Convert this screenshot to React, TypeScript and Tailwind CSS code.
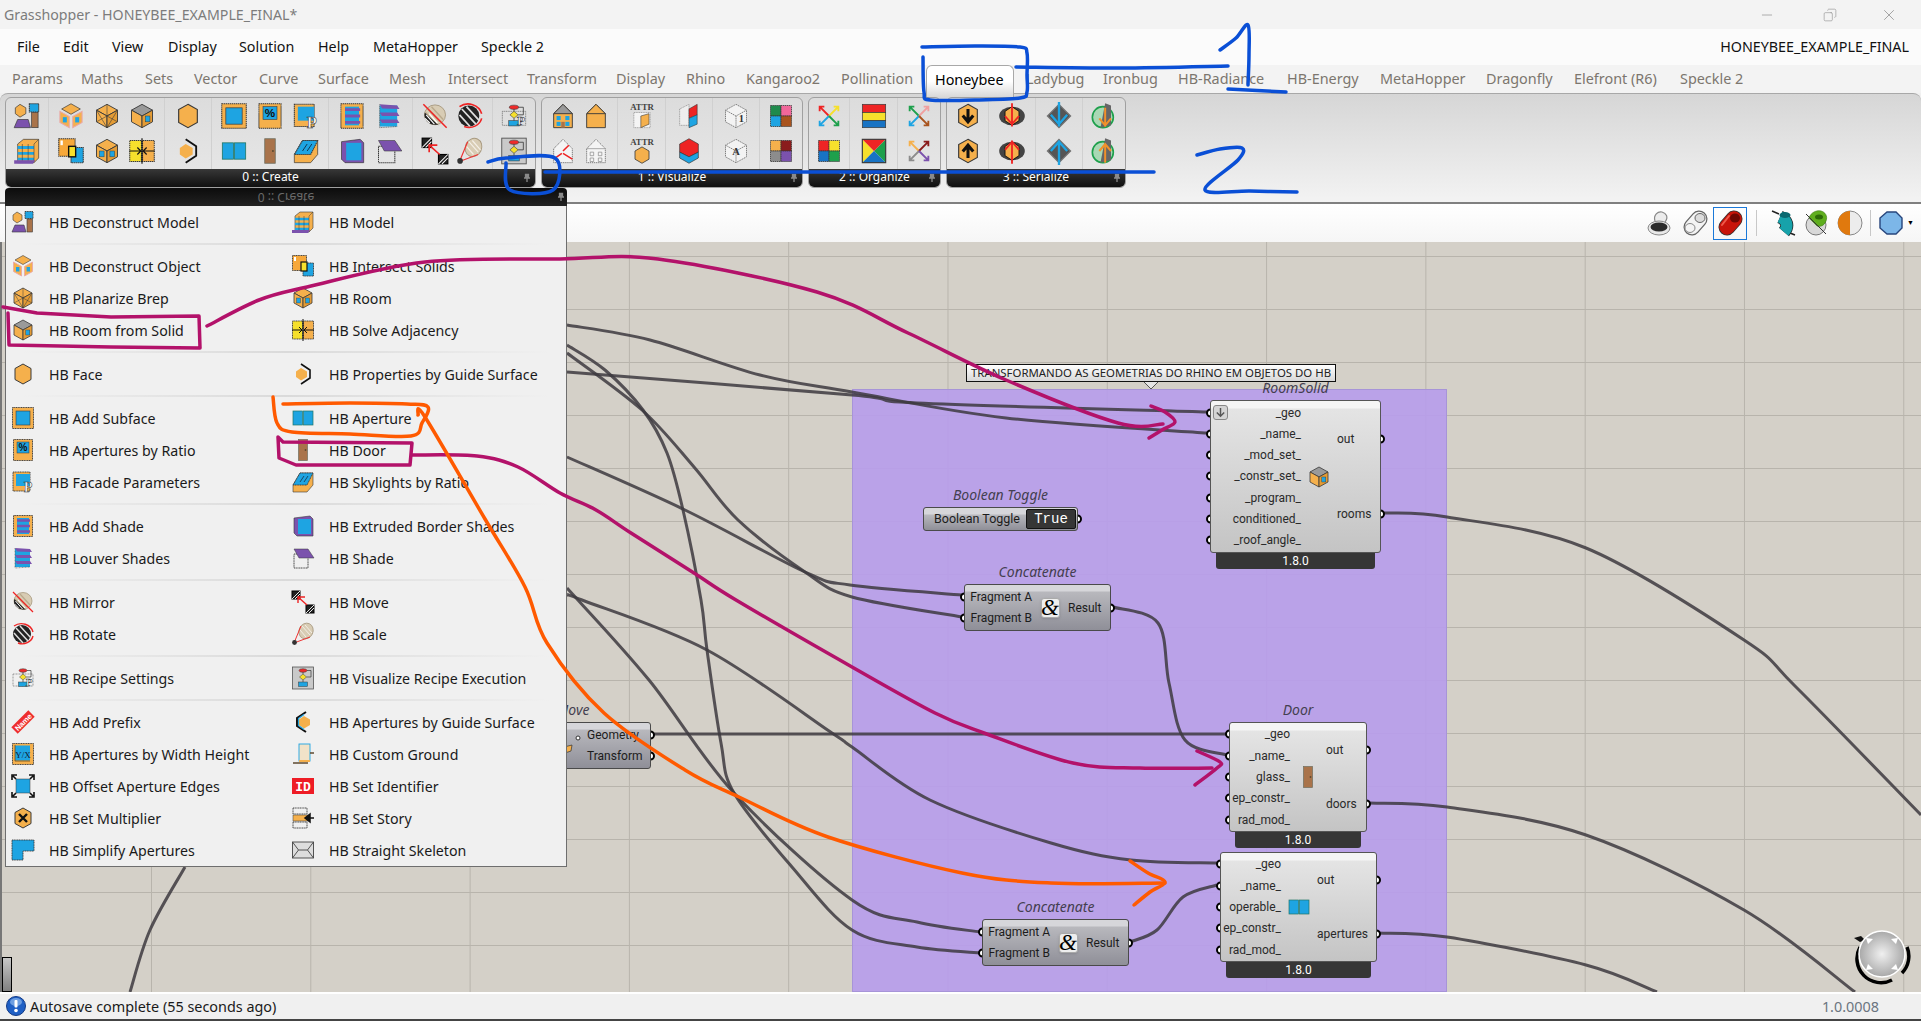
import type { ReactNode } from 'react';
import { Copy, Minus, X } from 'lucide-react';

type Pt = [number, number];

// catmull-rom through the points, good enough for wires and pen strokes
const smooth = (p: Pt[]) => {
  let d = `M${p[0][0]} ${p[0][1]}`;
  for (let i = 0; i < p.length - 1; i++) {
    const a = p[Math.max(i - 1, 0)];
    const b = p[i];
    const c = p[i + 1];
    const e = p[Math.min(i + 2, p.length - 1)];
    d += ` C${b[0] + (c[0] - a[0]) / 6} ${b[1] + (c[1] - a[1]) / 6} ${c[0] - (e[0] - b[0]) / 6} ${c[1] - (e[1] - b[1]) / 6} ${c[0]} ${c[1]}`;
  }
  return d;
};

const straight = (p: Pt[]) => p.map((q, i) => `${i ? 'L' : 'M'}${q[0]} ${q[1]}`).join(' ');

const OR = '#f5b04c';
const BL = '#1ea4e2';
const PU = '#7b52ad';
const BR = '#a9734a';
const DK = '#3a3a3a';
const dash = { stroke: DK, strokeWidth: 0.9, strokeDasharray: '1.2 .5' };

const Hex = ({ fill = OR }: { fill?: string }) => (
  <polygon points="12,2 20,6.5 20,17.5 12,22 4,17.5 4,6.5" fill={fill} stroke={DK} strokeWidth="1" />
);
const Cube = ({ top = OR }: { top?: string }) => (
  <>
    <polygon points="12,2 21,7 12,12 3,7" fill={top} stroke={DK} strokeWidth=".8" />
    <polygon points="3,7 12,12 12,22 3,17" fill={OR} stroke={DK} strokeWidth=".8" />
    <polygon points="21,7 12,12 12,22 21,17" fill="#e39b35" stroke={DK} strokeWidth=".8" />
  </>
);
const Sphere = () => (
  <g>
    <ellipse cx="12" cy="11" rx="9" ry="8.5" fill="#d8ccb4" stroke="#a89a80" strokeWidth=".8" />
    <path d="M6 6l10 11M9 4l10 11M4 9l9 10" stroke="#b9a98c" strokeWidth="1.2" />
  </g>
);
const Flow = () => (
  <g>
    <ellipse cx="12" cy="4.5" rx="4" ry="1.8" fill="#ee2b2b" stroke={DK} strokeWidth=".5" />
    <polygon points="12,8 15.5,11 12,14 8.5,11" fill="#f6e02c" stroke={DK} strokeWidth=".5" />
    <rect x="7.5" y="16" width="9" height="4.5" fill={BL} stroke={DK} strokeWidth=".5" />
    <path d="M12 6v2M12 14v2M15.5 11H20V4.5h-4" fill="none" stroke={DK} strokeWidth=".7" />
  </g>
);
const Quad = ({ c }: { c: string[] }) => (
  <g stroke={DK} strokeWidth=".7" strokeDasharray="1.2 .5">
    <rect x="3" y="3" width="9" height="9" fill={c[0]} />
    <rect x="12" y="3" width="9" height="9" fill={c[1]} />
    <rect x="3" y="12" width="9" height="9" fill={c[2]} />
    <rect x="12" y="12" width="9" height="9" fill={c[3]} />
  </g>
);
const Cross = ({ c }: { c: string[] }) => (
  <g strokeWidth="1.6" fill="none">
    <path d="M12 12L4 4M4 8V4h4" stroke={c[0]} />
    <path d="M12 12l8-8M16 4h4v4" stroke={c[1]} />
    <path d="M12 12l-8 8M4 16v4h4" stroke={c[2]} />
    <path d="M12 12l8 8M20 16v4h-4" stroke={c[3]} />
  </g>
);
const Wire = ({ children }: { children?: ReactNode }) => (
  <g fill="#f3f3f3" stroke="#777" strokeWidth=".8" strokeDasharray="1.2 .6">
    <polygon points="12,2 21,7 21,17 12,22 3,17 3,7" />
    <path d="M12 12V22M3 7l9 5 9-5" fill="none" />
    {children}
  </g>
);
const House = ({ roof = OR }: { roof?: string }) => (
  <g stroke={DK} strokeWidth=".8">
    <polygon points="4,10 12,2 20,10 20,22 4,22" fill={OR} />
    <polygon points="4,10 12,2 20,10 12,10" fill={roof} />
  </g>
);

const ICONS: Record<string, ReactNode> = {
  deconModel: (
    <>
      <polygon points="6,2 11,5 11,10 6,13 2,10 2,5" fill={OR} stroke={DK} strokeWidth=".6" />
      <rect x="14" y="1.5" width="8" height="7" fill={BL} {...dash} />
      <rect x="16" y="9" width="5.5" height="13" fill={BR} stroke={DK} strokeWidth=".6" />
      <polygon points="4,15 13,15 15,22 1,22" fill={PU} stroke={DK} strokeWidth=".6" />
    </>
  ),
  model: (
    <>
      <polygon points="4,6 9,2 22,2 22,18 18,22 4,22" fill={OR} stroke={DK} strokeWidth=".6" />
      <path d="M4 9h14M4 14h14M4 19h14" stroke={BL} strokeWidth="2.4" />
      <path d="M18 6v16M18 6l4-4M8 6v16M13 6v16" stroke={DK} strokeWidth=".5" />
      <polygon points="1,20 19,20 17,23 1,23" fill={PU} />
    </>
  ),
  deconObject: (
    <>
      <polygon points="12,1.5 20,6 12,10.5 4,6" fill={OR} stroke={DK} strokeWidth=".6" />
      <polygon points="2.5,8 10.5,12.5 10.5,22 2.5,17.5" fill={OR} stroke="#e9a8a8" strokeWidth=".9" />
      <polygon points="21.5,8 13.5,12.5 13.5,22 21.5,17.5" fill={OR} stroke="#e9a8a8" strokeWidth=".9" />
      <rect x="5" y="13" width="3.4" height="4.5" fill={BL} />
      <rect x="15.6" y="13" width="3.4" height="4.5" fill={BL} />
    </>
  ),
  planarize: (
    <>
      <Cube />
      <path d="M3 7l9 15M21 7l-9 15M12 2v10M3 17l9-5 9 5" stroke={DK} strokeWidth=".5" fill="none" />
    </>
  ),
  room: (
    <>
      <Cube />
      <rect x="5.5" y="12" width="4" height="5" fill={BL} stroke={DK} strokeWidth=".4" />
      <rect x="14.5" y="12" width="4" height="5" fill={BL} stroke={DK} strokeWidth=".4" />
    </>
  ),
  roomSolid: (
    <>
      <Cube top="#9a9a9a" />
      <rect x="14.8" y="12" width="4" height="5" fill={BL} stroke={DK} strokeWidth=".4" />
    </>
  ),
  intersect: (
    <>
      <rect x="1.5" y="1.5" width="14" height="15" fill="#f7a83a" {...dash} />
      <rect x="3" y="3" width="2" height="4" fill="#fff" />
      <rect x="12" y="9" width="10.5" height="13" fill={BL} {...dash} />
      <rect x="10" y="8" width="6" height="9" fill="#f6e02c" stroke="#111" strokeWidth="1.2" />
    </>
  ),
  adjacency: (
    <>
      <rect x="1.5" y="3" width="10" height="18" fill="#f6e02c" {...dash} />
      <rect x="12.5" y="3" width="10" height="18" fill={OR} {...dash} />
      <path d="M1 12h9M8 9l3 3-3 3M23 12h-9M16 9l-3 3 3 3M12 1v22" stroke="#111" strokeWidth="1" fill="none" />
    </>
  ),
  face: <Hex />,
  guide: (
    <>
      <polygon points="10,6 16,9.5 16,15 10,18.5 5,15 5,9.5" fill={OR} />
      <path d="M10 2l9 6v8l-9 6" fill="none" stroke="#111" strokeWidth="1.6" />
    </>
  ),
  subface: (
    <>
      <rect x="1.5" y="1.5" width="21" height="21" fill={OR} {...dash} />
      <rect x="5" y="5" width="14" height="14" fill={BL} stroke={DK} strokeWidth=".6" />
    </>
  ),
  aperture: (
    <>
      <rect x="2" y="5" width="9.5" height="14" fill={BL} stroke="#276" strokeWidth=".7" />
      <rect x="12.5" y="5" width="9.5" height="14" fill={BL} stroke="#276" strokeWidth=".7" />
    </>
  ),
  ratio: (
    <>
      <rect x="2.5" y="1.5" width="19" height="21" fill={OR} {...dash} />
      <rect x="6" y="4" width="12" height="11" fill={BL} stroke={DK} strokeWidth=".5" />
      <text x="12" y="13" fontSize="10" fontWeight="700" textAnchor="middle" fill="#111" fontFamily="Liberation Sans">%</text>
    </>
  ),
  door: (
    <>
      <rect x="7.5" y="1.5" width="9" height="21" fill={BR} stroke="#6e6e5e" strokeWidth=".7" />
      <circle cx="14.5" cy="12" r=".9" fill="#5d4a30" />
    </>
  ),
  facade: (
    <>
      <rect x="2" y="2" width="17" height="19" fill={OR} {...dash} />
      <rect x="5" y="4" width="14" height="12" fill={BL} />
      <text x="17" y="22" fontSize="14" fontWeight="700" textAnchor="middle" fill="#fff" stroke="#333" strokeWidth=".5" fontFamily="Liberation Serif">P</text>
    </>
  ),
  skylight: (
    <>
      <polygon points="9,3 22,3 22,15 16,22 2,22 2,15" fill={OR} stroke={DK} strokeWidth=".6" />
      <polygon points="9,3 22,3 16,15 2,15" fill={BL} {...dash} />
      <path d="M9 12l4-6M13 12l4-6" stroke="#123" strokeWidth=".7" />
    </>
  ),
  addShade: (
    <>
      <rect x="2.5" y="1.5" width="19" height="21" fill={OR} {...dash} />
      <rect x="6" y="4" width="12" height="16" fill={BL} />
      <path d="M6 6.5h13M6 12h13M6 17.5h13" stroke={PU} strokeWidth="2.4" />
    </>
  ),
  louver: (
    <>
      <rect x="4" y="3" width="15" height="18" fill={BL} />
      <path d="M4 2l15 1 2 3-15-.5zM4 9h15l2 3H6zM4 15h15l2 3H6z" fill={PU} />
      <path d="M4 2v20l15-1" fill="none" stroke={DK} strokeWidth=".5" strokeDasharray="1 .5" />
    </>
  ),
  extruded: (
    <>
      <polygon points="3,4 19,2 22,5 22,22 6,22 3,19" fill={PU} stroke={DK} strokeWidth=".6" />
      <rect x="7" y="5" width="13" height="15" fill={BL} />
    </>
  ),
  shade: (
    <>
      <rect x="3" y="8" width="14" height="14" fill="none" {...dash} />
      <polygon points="3,3 17,3 23,12 8,12" fill={PU} stroke={DK} strokeWidth=".5" />
    </>
  ),
  mirror: (
    <>
      <Sphere />
      <path d="M3.200 9A9 8.500 0 0 0 13.500 19.400L15 20z" fill="#222" />
      <path d="M4.500 11l7 8M7 10l7 8M3.500 14l4 4" stroke="#fff" strokeWidth="1" />
      <path d="M2 2l20 20" stroke="#ee2424" strokeWidth="1.3" />
    </>
  ),
  rotate: (
    <>
      <circle cx="11" cy="12" r="9" fill="#222" />
      <path d="M5 6l12 13M9 4l11 12M3 11l9 10" stroke="#ddd" strokeWidth="1.5" />
      <path d="M3 4a12 11 0 0 1 19 6M22 14a11 10 0 0 1-15 7" fill="none" stroke="#ee2424" strokeWidth="1.4" />
    </>
  ),
  move: (
    <>
      <rect x="1" y="1" width="8" height="8" fill="#222" stroke="#000" />
      <path d="M1 9l8-8M4 9l5-5" stroke="#fff" strokeWidth=".9" />
      <rect x="15" y="15" width="8" height="8" fill="#222" stroke="#000" />
      <path d="M15 23l8-8M18 23l5-5" stroke="#fff" strokeWidth=".9" />
      <path d="M16 15L7 7M7 13V7h7" fill="none" stroke="#ee2424" strokeWidth="1.4" />
    </>
  ),
  scale: (
    <>
      <ellipse cx="15" cy="9" rx="7" ry="8" transform="rotate(25 15 9)" fill="#d8ccb4" stroke="#a89a80" strokeWidth=".8" />
      <path d="M11 4l8 9M14 3l7 8M9 8l6 7" stroke="#f4efe6" strokeWidth="1" />
      <path d="M3 21L10 4M3 21l16-6" stroke="#e33" strokeWidth="1" />
      <circle cx="3.5" cy="20.5" r="2.4" fill="#333" />
    </>
  ),
  recipe: (
    <>
      <rect x="2" y="8" width="20" height="12" fill="none" stroke="#777" strokeWidth=".7" strokeDasharray="1 .5" />
      <Flow />
      <text x="18" y="20" fontSize="11" fontWeight="700" textAnchor="middle" fill="#fff" stroke="#333" strokeWidth=".5" fontFamily="Liberation Serif">P</text>
    </>
  ),
  vizRecipe: (
    <>
      <rect x="1.5" y="1" width="21" height="22" fill="#c9c9c9" stroke="#555" strokeWidth=".8" />
      <Flow />
    </>
  ),
  prefix: (
    <g transform="rotate(-45 12 12)">
      <rect x="0" y="7.5" width="24" height="9" fill="#ee2e2e" />
      <text x="12" y="15" fontSize="7.5" fontWeight="700" textAnchor="middle" fill="#fff" fontFamily="Liberation Sans">Name</text>
    </g>
  ),
  guideAp: (
    <>
      <polygon points="13,6 19,9.5 19,15 13,18.5 8,15 8,9.5" fill={OR} />
      <path d="M15 2L6 8v8l9 6" fill="none" stroke="#111" strokeWidth="2" />
      <path d="M13 4.5L7.5 8.5v7l5.500 4" fill="none" stroke={BL} strokeWidth="1.2" />
    </>
  ),
  widthHeight: (
    <>
      <rect x="1.500" y="1.500" width="21" height="21" fill={OR} {...dash} />
      <rect x="4" y="3.500" width="15" height="15" fill={BL} />
      <path d="M4 19h15M4 3v16" stroke="#6a4a1a" strokeWidth=".8" />
      <text x="12" y="16" fontSize="9" textAnchor="middle" fill="#123" fontFamily="Liberation Serif">Y/X</text>
    </>
  ),
  ground: (
    <>
      <rect x="8" y="2" width="11" height="17" fill="#f1e2c8" stroke={BL} strokeWidth=".9" />
      <path d="M2 21h15M19 11h4" stroke="#5d4a30" strokeWidth="1.4" />
      <path d="M8 19h11" stroke={OR} strokeWidth="2" />
    </>
  ),
  offset: (
    <>
      <rect x="5" y="5" width="14" height="14" fill={BL} stroke={DK} strokeWidth=".5" />
      <path d="M1 6V1h5M18 1h5v5M1 18v5h5M18 23h5v-5M2 2l3 3M22 2l-3 3M2 22l3-3M22 22l-3-3" fill="none" stroke="#111" strokeWidth="1.6" />
    </>
  ),
  identifier: (
    <>
      <rect x="1" y="4" width="22" height="16" fill="#ee1c25" />
      <text x="12" y="17" fontSize="13" fontWeight="700" textAnchor="middle" fill="#fff" fontFamily="Liberation Mono">ID</text>
    </>
  ),
  multiplier: (
    <>
      <Hex />
      <path d="M8 8l8 8M16 8l-8 8" stroke="#111" strokeWidth="2.400" />
    </>
  ),
  story: (
    <>
      <rect x="2" y="2" width="14" height="6" fill="none" {...dash} />
      <rect x="2" y="9" width="15" height="6" fill={OR} stroke={DK} strokeWidth=".5" />
      <rect x="2" y="16" width="14" height="6" fill="none" {...dash} />
      <path d="M23 12h-6M19 8l-5 4 5 4z" stroke="#111" strokeWidth="1.500" fill="#111" />
    </>
  ),
  simplify: <polygon points="1,2 23,2 23,13 12,13 12,22 1,22" fill={BL} {...dash} />,
  skeleton: (
    <>
      <rect x="1.500" y="4" width="21" height="16" fill="#ddd" stroke="#444" strokeWidth=".9" />
      <path d="M1.500 4l6 8h9l6-8M1.500 20l6-8M22.500 20l-6-8" fill="none" stroke="#444" strokeWidth=".9" />
    </>
  ),
  house1: (
    <>
      <House roof="#9a9a9a" />
      <rect x="6.500" y="12" width="3.500" height="3.500" fill={BL} />
      <rect x="14" y="12" width="3.500" height="3.500" fill={BL} />
      <rect x="6.500" y="17" width="3.500" height="3.500" fill={BL} />
      <rect x="10.500" y="17" width="3" height="5" fill={BR} />
      <rect x="14" y="17" width="3.500" height="3.500" fill={BL} />
    </>
  ),
  house2: <House />,
  wireHouse: (
    <>
      <polygon points="4,10 12,2 20,10 20,22 4,22" fill="#f4f4f4" stroke="#777" strokeWidth=".8" strokeDasharray="1.200 .6" />
      <path d="M12 12l5-5M12 14l8 5M11 14l-7 5" stroke="#ee2424" strokeWidth="1.300" />
    </>
  ),
  wireHouse2: (
    <>
      <polygon points="4,10 12,2 20,10 20,22 4,22" fill="#f4f4f4" stroke="#777" strokeWidth=".8" strokeDasharray="1.200 .6" />
      <path d="M4 10h16M7 13h3v3H7zM14 13h3v3h-3zM7 18h3v3H7zM14 18h3v3h-3z" fill="none" stroke="#888" strokeWidth=".6" />
    </>
  ),
  attrCube: (
    <>
      <text x="12" y="7" fontSize="7.500" fontWeight="700" textAnchor="middle" fill="#444" fontFamily="Liberation Serif">ATTR</text>
      <rect x="5" y="9" width="14" height="13" fill="#f4f4f4" stroke="#999" strokeWidth=".7" strokeDasharray="1 .5" />
      <polygon points="11,12 18,10 18,19 11,22" fill={OR} stroke={DK} strokeWidth=".5" />
    </>
  ),
  attrHex: (
    <>
      <text x="12" y="7" fontSize="7.500" fontWeight="700" textAnchor="middle" fill="#444" fontFamily="Liberation Serif">ATTR</text>
      <polygon points="12,8.500 18,12 18,19 12,22.500 6,19 6,12" fill={OR} stroke={DK} strokeWidth=".7" />
    </>
  ),
  redBlue: (
    <>
      <polygon points="4,6 12,2 12,20 4,20" fill="#eee" stroke="#888" strokeWidth=".6" strokeDasharray="1 .5" />
      <polygon points="12,6 19,2 19,11 12,14" fill="#ee2424" stroke={DK} strokeWidth=".5" />
      <polygon points="12,14 19,11 19,19 12,22" fill={BL} stroke={DK} strokeWidth=".5" />
    </>
  ),
  redBlueHex: (
    <>
      <polygon points="12,1.500 20,6 20,13 12,17 4,13 4,6" fill="#ee2424" stroke={DK} strokeWidth=".6" />
      <polygon points="4,13 12,17 20,13 20,18 12,22.500 4,18" fill={BL} stroke={DK} strokeWidth=".6" />
    </>
  ),
  cube1: (
    <Wire>
      <text x="16.500" y="17" fontSize="9" fontWeight="700" textAnchor="middle" fill="#333" stroke="none" fontFamily="Liberation Serif">1</text>
    </Wire>
  ),
  cubeA: (
    <Wire>
      <text x="12" y="15.500" fontSize="9" fontWeight="700" textAnchor="middle" fill="#333" stroke="none" fontFamily="Liberation Serif">A</text>
    </Wire>
  ),
  quadA: <Quad c={['#1f8a4c', '#f0679a', BL, '#a9541e']} />,
  quadB: <Quad c={[OR, '#8a1c1c', '#8c8c8c', PU]} />,
  quadC: <Quad c={['#ee2424', '#f6e02c', '#1873c4', '#1ea04c']} />,
  crossA: <Cross c={['#ee2424', '#f6e02c', BL, '#1ea04c']} />,
  crossB: <Cross c={['#1ea04c', '#f0a0a0', BL, '#a9541e']} />,
  crossC: <Cross c={[OR, '#8a1c1c', '#8c8c8c', PU]} />,
  stripes: (
    <>
      <rect x="2" y="2" width="20" height="7" fill="#ee2424" stroke={DK} strokeWidth=".6" />
      <rect x="2" y="9" width="20" height="7" fill="#f6e02c" stroke={DK} strokeWidth=".6" />
      <rect x="2" y="16" width="20" height="6" fill="#1873c4" stroke={DK} strokeWidth=".6" />
    </>
  ),
  xColor: (
    <>
      <polygon points="2,2 12,12 2,22" fill="#f6e02c" />
      <polygon points="22,2 12,12 22,22" fill="#1ea04c" />
      <polygon points="2,2 22,2 12,12" fill="#ee2424" />
      <polygon points="2,22 22,22 12,12" fill="#1873c4" />
      <rect x="2" y="2" width="20" height="20" fill="none" stroke={DK} strokeWidth="1" />
    </>
  ),
  dn: (
    <>
      <Hex />
      <path d="M12 6v11M7.500 11.500L12 17l4.500-5.500" fill="none" stroke="#111" strokeWidth="2.600" />
    </>
  ),
  up: (
    <>
      <Hex />
      <path d="M12 18V7M7.500 12.500L12 7l4.500 5.500" fill="none" stroke="#111" strokeWidth="2.600" />
    </>
  ),
  redDn: (
    <>
      <ellipse cx="12" cy="12" rx="11" ry="8" fill="#444" />
      <polygon points="12,4 18,8 18,16 12,20 6,16 6,8" fill={OR} stroke="#111" strokeWidth=".8" />
      <path d="M12 1v20M6 12l6 7 6-7" fill="none" stroke="#ee2424" strokeWidth="1.600" />
    </>
  ),
  redUp: (
    <>
      <ellipse cx="12" cy="12" rx="11" ry="8" fill="#444" />
      <polygon points="12,4 18,8 18,16 12,20 6,16 6,8" fill={OR} stroke="#111" strokeWidth=".8" />
      <path d="M12 23V3M6 11l6-7 6 7" fill="none" stroke="#ee2424" strokeWidth="1.600" />
    </>
  ),
  blueDn: (
    <>
      <polygon points="12,2 22,12 12,22 2,12" fill="#555" stroke="#777" />
      <path d="M12 0v21M5 11l7 8 7-8" fill="none" stroke={BL} strokeWidth="2" />
    </>
  ),
  blueUp: (
    <>
      <polygon points="12,2 22,12 12,22 2,12" fill="#555" stroke="#777" />
      <path d="M12 24V3M5 12l7-8 7 8" fill="none" stroke={BL} strokeWidth="2" />
    </>
  ),
  greenDn: (
    <>
      <ellipse cx="11" cy="13" rx="9" ry="9" fill="#a9d8b4" stroke="#1ea04c" strokeWidth="1.400" />
      <polygon points="13,1 18,3 18,20 9,22" fill="#666" />
      <path d="M13 5v16M8 14l5 6 5-6" fill="none" stroke="#f0912a" strokeWidth="1.700" />
    </>
  ),
  greenUp: (
    <>
      <ellipse cx="11" cy="13" rx="9" ry="9" fill="#a9d8b4" stroke="#1ea04c" strokeWidth="1.400" />
      <polygon points="13,1 18,3 18,20 9,22" fill="#666" />
      <path d="M13 22V6M8 12l5-6 5 6" fill="none" stroke="#f0912a" strokeWidth="1.700" />
    </>
  ),
};

const Ic = ({ n, size = 24 }: { n: string; size?: number }) => (
  <svg viewBox="0 0 24 24" width={size} height={size} className="shrink-0 overflow-visible">
    {ICONS[n]}
  </svg>
);

const MENU = [
  { label: 'File', w: 'w-[46px]' },
  { label: 'Edit', w: 'w-[49px]' },
  { label: 'View', w: 'w-[56px]' },
  { label: 'Display', w: 'w-[71px]' },
  { label: 'Solution', w: 'w-[79px]' },
  { label: 'Help', w: 'w-[55px]' },
  { label: 'MetaHopper', w: 'w-[108px]' },
  { label: 'Speckle 2', w: 'w-[90px]' },
];

const TABS_LEFT = [
  { label: 'Params', w: 'w-[69px]' },
  { label: 'Maths', w: 'w-[64px]' },
  { label: 'Sets', w: 'w-[49px]' },
  { label: 'Vector', w: 'w-[65px]' },
  { label: 'Curve', w: 'w-[59px]' },
  { label: 'Surface', w: 'w-[71px]' },
  { label: 'Mesh', w: 'w-[59px]' },
  { label: 'Intersect', w: 'w-[79px]' },
  { label: 'Transform', w: 'w-[89px]' },
  { label: 'Display', w: 'w-[70px]' },
  { label: 'Rhino', w: 'w-[60px]' },
  { label: 'Kangaroo2', w: 'w-[95px]' },
  { label: 'Pollination', w: 'w-[85px]' },
];

const TABS_RIGHT = [
  { label: 'Ladybug', w: 'w-[77px]' },
  { label: 'Ironbug', w: 'w-[75px]' },
  { label: 'HB-Radiance', w: 'w-[109px]' },
  { label: 'HB-Energy', w: 'w-[93px]' },
  { label: 'MetaHopper', w: 'w-[106px]' },
  { label: 'Dragonfly', w: 'w-[88px]' },
  { label: 'Elefront (R6)', w: 'w-[106px]' },
  { label: 'Speckle 2', w: 'w-[90px]' },
];

const PANELS = [
  {
    title: '0 :: Create',
    w: 'w-[531px]',
    groups: [
      { w: 'w-[43px]', cols: [['deconModel', 'model']] },
      { w: 'w-[116.500px]', cols: [['deconObject', 'intersect'], ['planarize', 'room'], ['roomSolid', 'adjacency']] },
      { w: 'w-[46.500px]', cols: [['face', 'guide']] },
      { w: 'w-[117.500px]', cols: [['subface', 'aperture'], ['ratio', 'door'], ['facade', 'skylight']] },
      { w: 'w-[84px]', cols: [['addShade', 'extruded'], ['louver', 'shade']] },
      { w: 'w-[80px]', cols: [['mirror', 'move'], ['rotate', 'scale']] },
      { w: 'w-[42px]', cols: [['recipe', 'vizRecipe']] },
    ],
  },
  {
    title: '1 :: Visualize',
    w: 'w-[262px]',
    groups: [
      { w: 'w-[76px]', cols: [['house1', 'wireHouse'], ['house2', 'wireHouse2']] },
      { w: 'w-[48px]', cols: [['attrCube', 'attrHex']] },
      { w: 'w-[47px]', cols: [['redBlue', 'redBlueHex']] },
      { w: 'w-[46.500px]', cols: [['cube1', 'cubeA']] },
      { w: 'w-[42px]', cols: [['quadA', 'quadB']] },
    ],
  },
  {
    title: '2 :: Organize',
    w: 'w-[133px]',
    groups: [
      { w: 'w-[41px]', cols: [['crossA', 'quadC']] },
      { w: 'w-[48px]', cols: [['stripes', 'xColor']] },
      { w: 'w-[42px]', cols: [['crossB', 'crossC']] },
    ],
  },
  {
    title: '3 :: Serialize',
    w: 'w-[180px]',
    groups: [
      { w: 'w-[42px]', cols: [['dn', 'up']] },
      { w: 'w-[47px]', cols: [['redDn', 'redUp']] },
      { w: 'w-[47px]', cols: [['blueDn', 'blueUp']] },
      { w: 'w-[42px]', cols: [['greenDn', 'greenUp']] },
    ],
  },
];

const MENU_GROUPS: [string, string][][] = [
  [['deconModel|HB Deconstruct Model', 'model|HB Model']],
  [
    ['deconObject|HB Deconstruct Object', 'intersect|HB Intersect Solids'],
    ['planarize|HB Planarize Brep', 'room|HB Room'],
    ['roomSolid|HB Room from Solid', 'adjacency|HB Solve Adjacency'],
  ],
  [['face|HB Face', 'guide|HB Properties by Guide Surface']],
  [
    ['subface|HB Add Subface', 'aperture|HB Aperture'],
    ['ratio|HB Apertures by Ratio', 'door|HB Door'],
    ['facade|HB Facade Parameters', 'skylight|HB Skylights by Ratio'],
  ],
  [
    ['addShade|HB Add Shade', 'extruded|HB Extruded Border Shades'],
    ['louver|HB Louver Shades', 'shade|HB Shade'],
  ],
  [
    ['mirror|HB Mirror', 'move|HB Move'],
    ['rotate|HB Rotate', 'scale|HB Scale'],
  ],
  [['recipe|HB Recipe Settings', 'vizRecipe|HB Visualize Recipe Execution']],
  [
    ['prefix|HB Add Prefix', 'guideAp|HB Apertures by Guide Surface'],
    ['widthHeight|HB Apertures by Width Height', 'ground|HB Custom Ground'],
    ['offset|HB Offset Aperture Edges', 'identifier|HB Set Identifier'],
    ['multiplier|HB Set Multiplier', 'story|HB Set Story'],
    ['simplify|HB Simplify Apertures', 'skeleton|HB Straight Skeleton'],
  ],
];

const Pin = () => (
  <svg viewBox="0 0 10 10" width="10" height="10" className="shrink-0">
    <path d="M5 9V5M2 5h6M3.500 5V1.500h3V5" stroke="#8a8a8a" strokeWidth="1.300" fill="#8a8a8a" />
  </svg>
);

const Panel = ({ title, w, groups }: (typeof PANELS)[number]) => (
  <div className={`${w} overflow-hidden rounded-md border border-[#a0a0a0] bg-gradient-to-b from-[#dcdcdc] to-[#e8e8e8]`}>
    <div className="flex h-[71px]">
      {groups.map((g, i) => (
        <div key={i} className={`${g.w} flex border-r border-[#d0d0d0] px-1 last:border-r-0`}>
          {g.cols.map((c) => (
            <div key={c[0]} className="flex flex-1 flex-col items-center justify-center">
              <div className="flex h-[35px] items-center"><Ic n={c[0]} size={28} /></div>
              <div className="flex h-[35px] items-center"><Ic n={c[1]} size={28} /></div>
            </div>
          ))}
        </div>
      ))}
    </div>
    <div className="relative flex h-[18px] items-center justify-center bg-gradient-to-b from-[#383838] to-[#101010] pb-[3px] text-[12px] text-white">
      {title}
      <span className="absolute right-[3px] top-1"><Pin /></span>
    </div>
  </div>
);

const Dropdown = () => (
  <div className="absolute left-[5px] top-[188px] z-20 w-[562px]">
    <div className="relative flex h-[18px] items-center justify-center rounded-t-sm bg-gradient-to-b from-[#0c0c0c] to-[#222] text-[12px] text-[#6a6a6a]">
      <span className="-scale-y-100">0 :: Create</span>
      <span className="absolute right-[1px] top-1"><Pin /></span>
    </div>
    <div className="border border-t-0 border-[#6e6e6e] bg-[#f0f0f0]">
      {MENU_GROUPS.map((g, gi) => (
        <div key={gi}>
          {gi > 0 && (
            <div className="flex h-3 items-center px-4">
              <div className="h-[2px] w-full bg-gradient-to-r from-transparent via-[#dadada] to-transparent" />
            </div>
          )}
          {g.map((row) => (
            <div key={row[0]} className="grid h-8 grid-cols-[280px_280px]">
              {row.map((cell) => {
                const [icon, label] = cell.split('|');
                return (
                  <div key={cell} className="flex items-center gap-[14px] pl-[5px] text-[14.200px] text-[#1a1a1a]">
                    <Ic n={icon} size={24} />
                    <span className="pt-px">{label}</span>
                  </div>
                );
              })}
            </div>
          ))}
        </div>
      ))}
    </div>
  </div>
);

// sits under the box so only the outer half of the ring shows
const Grip = ({ side }: { side: 'l' | 'r' }) => (
  <span
    className={`absolute top-1/2 -z-10 h-[9px] w-[9px] -translate-y-1/2 rounded-full border-2 border-black bg-white ${
      side === 'l' ? '-left-[5px]' : '-right-[5px]'
    }`}
  />
);

const Title = ({ children }: { children: ReactNode }) => (
  <div className="mb-[2px] h-5 text-center text-[14px] leading-5 text-[#443f50] italic">{children}</div>
);

type HBProps = {
  pos: string;
  title: string;
  h: string;
  inW: string;
  inputs: string[];
  outputs: string[];
  icon: string;
  iconSize?: number;
  arrow?: boolean;
};

const HBNode = ({ pos, title, h, inW, inputs, outputs, icon, iconSize = 24, arrow }: HBProps) => (
  <div className={`absolute z-10 ${pos}`}>
    <Title>{title}</Title>
    <div className={`relative flex ${h} rounded-[3px] border border-[#555] bg-[linear-gradient(#f5f5f5_0,#f5f5f5_7px,#e4e4e4_8px,#c4c4c4_100%)] font-['Roboto',sans-serif] text-[12px] text-[#2a2a2a]`}>
      {arrow && (
        <div className="absolute left-[2px] top-[4px] flex h-[15px] w-[15px] items-center justify-center rounded-[3px] border border-[#888] bg-[#d4d4d4]">
          <svg viewBox="0 0 12 12" width="11" height="11">
            <path d="M6 1v9M2 6l4 4 4-4" fill="none" stroke="#555" strokeWidth="1.600" />
          </svg>
        </div>
      )}
      <div className={`${inW} flex shrink-0 flex-col justify-center`}>
        {inputs.map((t) => (
          <div key={t} className="relative flex h-[21.330px] items-center justify-end">
            <Grip side="l" />
            {t}
          </div>
        ))}
      </div>
      <div className="flex w-9 shrink-0 items-center justify-center"><Ic n={icon} size={iconSize} /></div>
      <div className="flex flex-1 flex-col">
        {outputs.map((t) => (
          <div key={t} className="relative flex flex-1 items-center">
            {t}
            <Grip side="r" />
          </div>
        ))}
      </div>
    </div>
    <div className="mx-[6px] flex h-4 items-center justify-center rounded-b-[3px] bg-[#363636] font-['Roboto',sans-serif] text-[12px] text-white">1.8.0</div>
  </div>
);

const GreyBox = "bg-[linear-gradient(#d6d6da_0,#d6d6da_6px,#b8b8bd_7px,#8f8f98_100%)] font-['Roboto',sans-serif]";

const Concat = ({ pos }: { pos: string }) => (
  <div className={`absolute z-10 w-[147px] ${pos}`}>
    <Title>Concatenate</Title>
    <div className={`relative flex h-[47px] rounded-[3px] border border-[#4a4a4a] text-[12px] text-[#1c1c1c] ${GreyBox}`}>
      <div className="flex w-[67px] shrink-0 flex-col justify-center">
        {['Fragment A', 'Fragment B'].map((t) => (
          <div key={t} className="relative flex h-[21.330px] items-center justify-end">
            <Grip side="l" />
            {t}
          </div>
        ))}
      </div>
      <div className="flex w-9 shrink-0 items-center justify-center">
        <span className="flex h-[20px] w-[19px] items-center justify-center rounded-[3px] border border-[#aaa] bg-[#eeeeee] font-['Liberation_Serif',serif] text-[23px] leading-none text-black italic shadow-sm">&amp;</span>
      </div>
      <div className="relative flex flex-1 items-center">
        Result
        <Grip side="r" />
      </div>
    </div>
  </div>
);

const Toggle = () => (
  <div className="absolute left-[921px] top-[243px] z-10 w-[155px]">
    <Title>Boolean Toggle</Title>
    <div className={`relative flex h-[24px] items-center rounded-[3px] border border-[#4a4a4a] pl-[10px] text-[12.500px] text-[#1c1c1c] ${GreyBox}`}>
      Boolean Toggle
      <span className="absolute right-[1px] top-[1px] flex h-5 w-[50px] items-center justify-center rounded-[2px] border border-[#111] bg-[#363636] font-['Liberation_Mono',monospace] text-[14px] text-white">True</span>
      <Grip side="r" />
    </div>
  </div>
);

const MoveNode = () => (
  <div className="absolute left-[493px] top-[458px] z-10 w-[156px]">
    <Title>Move</Title>
    <div className={`relative flex h-[47px] justify-end rounded-[3px] border border-[#4a4a4a] text-[12px] text-[#1c1c1c] ${GreyBox}`}>
      <svg viewBox="0 0 24 24" width="24" height="24" className="absolute left-[62px] top-[10px]">
        <path d="M6 14l8-2-1 6-6 2z" fill={OR} stroke="#333" strokeWidth=".7" />
        <circle cx="20" cy="5" r="2" fill="#fff" stroke="#333" />
      </svg>
      <div className="flex w-[63px] flex-col justify-center">
        {['Geometry', 'Transform'].map((t) => (
          <div key={t} className="relative flex h-[21.330px] items-center">
            {t}
            <Grip side="r" />
          </div>
        ))}
      </div>
    </div>
  </div>
);

const WIRES: Pt[][] = [
  [[567, 372], [852, 395], [917, 403], [1207, 412]],
  [[567, 325], [650, 340], [760, 375], [852, 392], [1006, 418], [1207, 433]],
  [[567, 345], [605, 370], [643, 410], [667, 453], [683, 510], [701, 600], [707, 650], [721, 743], [734, 793], [792, 867], [852, 930], [917, 947], [982, 953]],
  [[567, 353], [642, 410], [694, 467], [738, 520], [805, 572], [852, 597], [962, 617]],
  [[567, 457], [685, 510], [805, 572], [850, 585], [962, 595]],
  [[567, 588], [649, 680], [734, 793], [852, 900], [917, 922], [980, 932]],
  [[567, 595], [582, 600], [707, 650], [832, 733], [852, 747], [930, 800], [1051, 843], [1131, 860], [1217, 863]],
  [[652, 734], [1227, 734]],
  [[1113, 607], [1158, 623], [1169, 683], [1185, 740], [1227, 755]],
  [[1130, 942], [1157, 930], [1183, 897], [1217, 885]],
  [[1383, 513], [1447, 517], [1586, 548], [1744, 640], [1796, 687], [1921, 815]],
  [[1369, 803], [1447, 807], [1586, 835], [1744, 910], [1855, 992]],
  [[1377, 933], [1447, 937], [1586, 965], [1657, 992]],
  [[185, 867], [150, 930], [130, 992]],
];

const BLUE: Pt[][] = [
  [[922, 47], [975, 46], [1020, 47], [1027, 53], [1027, 75], [1027, 92], [1020, 98], [975, 100], [930, 100], [924, 92], [923, 57]],
  [[1016, 67], [1120, 68], [1228, 66]],
  [[1220, 50], [1236, 38], [1248, 25], [1249, 55], [1248, 85]],
  [[1228, 89], [1286, 92]],
  [[1197, 155], [1220, 149], [1242, 148], [1238, 160], [1205, 190], [1250, 191], [1297, 192]],
  [[488, 162], [506, 158], [555, 158], [553, 190], [510, 190], [506, 163]],
  [[545, 172], [800, 172], [1154, 172]],
];

const CRIMSON: Pt[][] = [
  [[207, 326], [259, 300], [307, 287], [425, 262], [560, 259], [658, 259], [817, 292], [908, 333], [1006, 380], [1118, 423], [1163, 424]],
  [[1151, 406], [1165, 412], [1175, 422], [1162, 430], [1149, 438]],
  [[412, 455], [477, 456], [518, 467], [560, 493], [596, 510], [631, 533], [694, 573], [736, 600], [852, 667], [935, 713], [984, 733], [1073, 763], [1140, 768], [1212, 768]],
  [[1197, 751], [1220, 762], [1217, 768], [1195, 785]],
];

// the two boxes drawn with the pen have nearly straight sides
const CRIMSON_BOX: Pt[][] = [
  [[3, 307], [37, 313], [111, 317], [199, 316], [200, 348], [111, 347], [9, 345], [8, 313]],
  [[278, 437], [283, 442], [412, 443], [410, 465], [296, 465], [279, 458], [278, 437]],
];

const ORANGE: Pt[][] = [
  [[273, 397], [277, 423], [292, 432], [350, 434], [411, 436], [422, 423], [428, 407], [407, 404], [350, 403], [283, 404]],
  [[418, 415], [425, 417], [485, 519], [525, 587], [547, 643], [604, 713], [685, 770], [739, 797], [828, 837], [962, 873], [1051, 883], [1165, 883]],
  [[1130, 861], [1148, 873], [1165, 882], [1150, 892], [1134, 905]],
];

const ToolIcon = ({ kind }: { kind: string }) => (
  <svg viewBox="0 0 26 28" width="26" height="28">
    {kind === 'ghost' && (
      <>
        <path d="M9 12c-2-6 3-10 7-9s7 5 3 10" fill="#ececec" stroke="#888" strokeWidth="1.200" />
        <ellipse cx="13" cy="19" rx="11" ry="7" fill="#e8e8e8" stroke="#888" />
        <ellipse cx="13" cy="18" rx="8.500" ry="4.500" fill="#2c2c2c" />
      </>
    )}
    {kind === 'wire' && (
      <>
        <path d="M10 18L17 10" stroke="#666" strokeWidth="17" strokeLinecap="round" />
        <path d="M10 18L17 10" stroke="#f4f4f4" strokeWidth="14.500" strokeLinecap="round" />
        <ellipse cx="18" cy="9" rx="5" ry="4.500" fill="#dcdcdc" stroke="#666" />
        <ellipse cx="8" cy="19" rx="5" ry="4.500" fill="#f4f4f4" stroke="#888" />
      </>
    )}
    {kind === 'red' && (
      <>
        <path d="M10 18L17 10" stroke="#333" strokeWidth="17" strokeLinecap="round" />
        <path d="M10 18L17 10" stroke="#c8140a" strokeWidth="15.500" strokeLinecap="round" />
        <path d="M5 16L12 7" stroke="#ef5a4a" strokeWidth="2" strokeLinecap="round" />
        <ellipse cx="18" cy="9" rx="5" ry="4.500" fill="#6e0703" />
      </>
    )}
    {kind === 'teal' && (
      <>
        <path d="M2 2l7 3M20 24l5 2" stroke="#222" strokeWidth="1.500" />
        <path d="M10 8C17 11 19 17 14 23" fill="none" stroke="#222" strokeWidth="13" />
        <path d="M10 8C17 11 19 17 14 23" fill="none" stroke="#17a2aa" strokeWidth="11.500" />
        <ellipse cx="15" cy="6" rx="5.500" ry="3" fill="#0a6970" />
      </>
    )}
    {kind === 'green' && (
      <>
        <circle cx="13" cy="16" r="10" fill="#d8d8d8" stroke="#777" />
        <path d="M6 9c2-6 8-8 12-7s7 5 5 10-6 6-9 5z" fill="#5fae1e" stroke="#3a7a10" strokeWidth=".6" />
        <ellipse cx="16" cy="8" rx="4" ry="2.500" fill="#2c6a08" />
        <path d="M3 5l20 20" stroke="#333" />
      </>
    )}
    {kind === 'half' && (
      <>
        <circle cx="13" cy="14" r="12" fill="#ececec" stroke="#888" />
        <path d="M13 2a12 12 0 0 0 0 24z" fill="#e0790e" />
      </>
    )}
    {kind === 'blue' && (
      <polygon points="9,3 18,3 24,9 24,19 18,25 9,25 2,19 2,9" fill="#7cb6e8" stroke="#27457c" strokeWidth="1.400" />
    )}
  </svg>
);

const App = () => (
  <div className="relative flex h-[1021px] w-[1921px] flex-col overflow-hidden bg-[#f0f0f0] font-['Noto_Sans',sans-serif]">
    {/* title bar */}
    <div className="flex h-[29px] items-center justify-between bg-[#f3f3f3] pl-1 text-[14.200px] text-[#7c7c7c]">
      <span>Grasshopper - HONEYBEE_EXAMPLE_FINAL*</span>
      <div className="flex items-center text-[#8a8a8a]">
        <Minus size={16} strokeWidth={1} />
        <Copy size={14} strokeWidth={1} className="ml-[48px] -scale-x-100" />
        <X size={18} strokeWidth={1} className="ml-[43px] mr-[23px]" />
      </div>
    </div>

    {/* menu */}
    <div className="flex h-9 items-center justify-between bg-[#fbfbfb] pl-[17px] pr-[12px] text-[14.300px] text-[#111]">
      <div className="flex">
        {MENU.map((m) => (
          <span key={m.label} className={m.w}>{m.label}</span>
        ))}
      </div>
      <span>HONEYBEE_EXAMPLE_FINAL</span>
    </div>

    {/* tabs */}
    <div className="relative z-[1] flex h-7 items-start bg-[#f3f3f3] pl-3 text-[14.400px] text-[#7c766e]">
      {TABS_LEFT.map((t) => (
        <span key={t.label} className={`${t.w} pt-[3px]`}>{t.label}</span>
      ))}
      <span className="mr-3 h-8 w-[88px] rounded-t-md border border-b-0 border-[#a8a8a8] bg-gradient-to-b from-white via-white to-[#d8d8d8] pl-2 pt-[3px] text-black">Honeybee</span>
      {TABS_RIGHT.map((t) => (
        <span key={t.label} className={`${t.w} pt-[3px]`}>{t.label}</span>
      ))}
    </div>

    {/* ribbon */}
    <div className="flex h-[111px] gap-[5px] rounded-t-lg border-t border-b-2 border-t-[#a8a8a8] border-b-[#808080] bg-gradient-to-b from-[#d6d6d6] to-[#f3f3f3] pl-[5px] pt-[3px]">
      {PANELS.map((p) => (
        <div key={p.title} className="h-[91px]"><Panel {...p} /></div>
      ))}
    </div>

    {/* canvas toolbar */}
    <div className="flex h-[38px] items-center justify-end bg-gradient-to-b from-white to-[#f6f6f6] pr-[4px]">
      <div className="flex items-center">
        <ToolIcon kind="ghost" />
        <span className="ml-[10px]"><ToolIcon kind="wire" /></span>
        <span className="ml-[5px] flex h-[33px] w-[34px] items-center justify-center border border-[#1a78d8]"><ToolIcon kind="red" /></span>
        <span className="ml-[9px] mr-[11px] h-[26px] w-px bg-[#c8c8c8]" />
        <span className="ml-[2px]"><ToolIcon kind="teal" /></span>
        <span className="ml-[7px]"><ToolIcon kind="green" /></span>
        <span className="ml-[8px]"><ToolIcon kind="half" /></span>
        <span className="mx-[7px] h-[26px] w-px bg-[#c8c8c8]" />
        <ToolIcon kind="blue" />
        <span className="ml-[3px] mr-[3px] text-[7px] text-black">▼</span>
      </div>
    </div>

    {/* canvas */}
    <div className="relative h-[750px] overflow-hidden border-l-2 border-[#777] bg-[#d4d0c8] bg-[linear-gradient(#b8b4ac_1px,transparent_1px),linear-gradient(90deg,#b8b4ac_1px,transparent_1px)] bg-[size:159.300px_53px] bg-[position:149px_14px]">
      <div className="absolute left-[850px] top-[147px] h-[603px] w-[595px] border border-[#a794d8] bg-[#b79dea]/[0.92]" />

      <svg viewBox="2 242 1919 750" className="absolute left-0 top-0 h-[750px] w-[1919px]">
        {WIRES.map((w, i) => (
          <path key={i} d={smooth(w)} fill="none" stroke="#3d3a40" strokeOpacity=".85" strokeWidth="3" />
        ))}
      </svg>

      <div className="absolute left-[964px] top-[122px] z-10 border border-[#111] bg-gradient-to-b from-white to-[#d8d8d8] px-1 text-[11.400px] leading-[16px] text-[#222]">
        TRANSFORMANDO AS GEOMETRIAS DO RHINO EM OBJETOS DO HB
        <svg viewBox="0 0 14 7" width="14" height="7" className="absolute left-[177px] top-[17px]">
          <path d="M0 0l7 7 7-7" fill="#e4e4e4" stroke="#555" />
        </svg>
      </div>

      <HBNode
        pos="left-[1208px] top-[136px] w-[171px]"
        title="RoomSolid"
        h="h-[153px]"
        inW="w-[90px]"
        inputs={['_geo', '_name_', '_mod_set_', '_constr_set_', '_program_', 'conditioned_', '_roof_angle_']}
        outputs={['out', 'rooms']}
        icon="roomSolid"
        arrow
      />
      <HBNode
        pos="left-[1227px] top-[458px] w-[138px]"
        title="Door"
        h="h-[110px]"
        inW="w-[60px]"
        inputs={['_geo', '_name_', 'glass_', 'ep_constr_', 'rad_mod_']}
        outputs={['out', 'doors']}
        icon="door"
      />
      <HBNode
        pos="left-[1218px] top-[588px] w-[157px]"
        title=" "
        h="h-[110px]"
        inW="w-[60px]"
        inputs={['_geo', '_name_', 'operable_', 'ep_constr_', 'rad_mod_']}
        outputs={['out', 'apertures']}
        icon="aperture"
      />
      <Concat pos="left-[962px] top-[320px]" />
      <Concat pos="left-[980px] top-[655px]" />
      <Toggle />
      <MoveNode />

      {/* compass */}
      <svg viewBox="0 0 60 60" width="60" height="60" className="absolute left-[1850px] top-[683px] z-10">
        <defs>
          <radialGradient id="compass">
            <stop offset="0" stopColor="#f0f0f0" />
            <stop offset="1" stopColor="#a8a8a8" />
          </radialGradient>
        </defs>
        <path d="M8 17l-6-4 7-2 4 4z" fill="#111" />
        <path d="M8 22A24 24 0 0 0 40 55M50 48A24 24 0 0 0 55 22" fill="none" stroke="#000" strokeWidth="3.500" />
        <circle cx="30" cy="29" r="23" fill="url(#compass)" stroke="#fff" strokeWidth="1.500" />
        <path d="M14 13l7 1-5 5zM46 13l-7 1 5 5zM14 45l7-1-5-5zM46 45l-7-1 5-5z" fill="#fff" />
      </svg>

      {/* scroll thumb */}
      <div className="absolute bottom-0 left-0 h-[35px] w-[10px] border border-black bg-gradient-to-b from-[#c8c8c8] to-[#808080]" />
    </div>

    {/* status bar */}
    <div className="flex h-[29px] items-center justify-between border-t-2 border-b-2 border-t-white border-b-[#444] bg-[#f0f0f0] pl-[6px] pr-[42px] text-[14.400px]">
      <div className="flex items-center gap-[4px] text-[#1a1a1a]">
        <svg viewBox="0 0 20 20" width="20" height="20">
          <circle cx="10" cy="10" r="9.500" fill="#1f5fc4" stroke="#123a86" />
          <ellipse cx="10" cy="6" rx="6" ry="4" fill="#8fb9ee" opacity=".7" />
          <rect x="8.500" y="4" width="3" height="7.500" rx="1" fill="#fff" />
          <circle cx="10" cy="14.500" r="1.800" fill="#fff" />
        </svg>
        Autosave complete (55 seconds ago)
      </div>
      <span className="text-[#6b7580]">1.0.0008</span>
    </div>

    <Dropdown />

    {/* hand-drawn annotations on top of the shot */}
    <svg viewBox="0 0 1921 1021" className="pointer-events-none absolute left-0 top-0 z-30 h-[1021px] w-[1921px]">
      <g fill="none" strokeLinecap="round" strokeLinejoin="round" strokeWidth="3.500">
        {BLUE.map((p, i) => <path key={i} d={smooth(p)} stroke="#0a4fd6" />)}
        {CRIMSON.map((p, i) => <path key={i} d={smooth(p)} stroke="#b3126a" />)}
        {CRIMSON_BOX.map((p, i) => <path key={i} d={straight(p)} stroke="#b3126a" />)}
        {ORANGE.map((p, i) => <path key={i} d={smooth(p)} stroke="#ff5a00" />)}
      </g>
    </svg>
  </div>
);

export default App;
